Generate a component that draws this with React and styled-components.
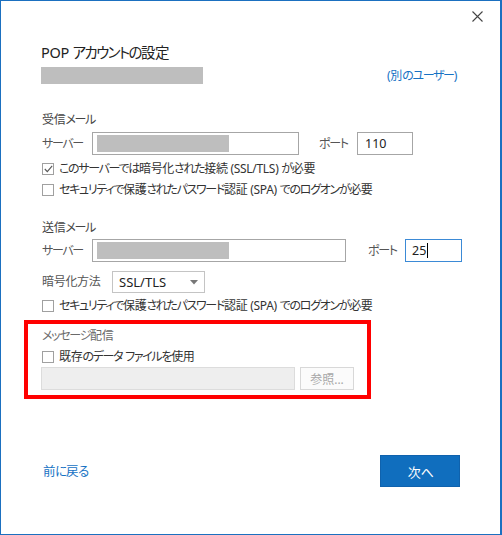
import React from "react";
import styled, { createGlobalStyle } from "styled-components";

const GlobalStyle = createGlobalStyle`
  html, body { margin: 0; padding: 0; background: #fff; }
  body {
    font-family: "Noto Sans", "Noto Sans CJK JP", sans-serif;
    font-feature-settings: "palt";
    -webkit-font-smoothing: antialiased;
  }
  * { box-sizing: border-box; }
`;

const Window = styled.div`
  width: 502px;
  height: 535px;
  border: 1px solid #1b70c0;
  border-right-width: 2px;
  background: #fff;
  display: flex;
  flex-direction: column;
  padding: 0 40px 0 40px;
  color: #333;
  font-family: "Noto Sans", "Noto Sans CJK JP", sans-serif;
  font-feature-settings: "palt";
  font-size: 12px;
  letter-spacing: -0.3px;
`;

/* kana runs are set tighter, like the narrow kana of the Windows UI font */
const Kana = styled.span`
  letter-spacing: -0.11em;
`;

const TextRun = styled.span`
  white-space: pre;
`;

const KANA_SPLIT = /([\u3040-\u30ff]+)/;
const KANA_ONLY = /^[\u3040-\u30ff]+$/;

const JP = ({ children }) => (
  <TextRun>
    {String(children)
      .split(KANA_SPLIT)
      .map((part, i) => (KANA_ONLY.test(part) ? <Kana key={i}>{part}</Kana> : part))}
  </TextRun>
);

const Header = styled.div`
  height: 41px;
  display: flex;
  justify-content: flex-end;
  align-items: flex-start;
  padding-top: 9px;
  margin-right: -23px;
`;

const CloseButton = styled.button`
  width: 12px;
  height: 12px;
  border: none;
  background: none;
  padding: 0;
  display: flex;
  align-items: center;
  justify-content: center;
  cursor: pointer;
`;

const Title = styled.h1`
  margin: 0;
  height: 20px;
  line-height: 20px;
  font-size: 14.5px;
  font-weight: 400;
  letter-spacing: -0.3px;
  color: #222;
  font-family: "Noto Sans", "Noto Sans CJK JP", sans-serif;
`;

const AccountRow = styled.div`
  margin-top: 5px;
  height: 17px;
  display: flex;
  align-items: center;
  justify-content: space-between;
  padding-right: 3px;
`;

const Redacted = styled.div`
  width: ${(p) => p.$w}px;
  height: ${(p) => p.$h}px;
  background: #bebebe;
`;

const Link = styled.a`
  color: #1672c4;
  font-size: ${(p) => p.$size || 12}px;
  text-decoration: none;
  cursor: pointer;
  line-height: 17px;
`;

const SectionLabel = styled.div`
  margin-top: ${(p) => p.$mt}px;
  height: 18px;
  line-height: 18px;
  color: ${(p) => (p.$muted ? "#6a6a6a" : "#444")};
  padding-left: 1px;
`;

const Row = styled.div`
  margin-top: ${(p) => p.$mt || 0}px;
  height: ${(p) => p.$h || 23}px;
  display: flex;
  align-items: center;
`;

const FieldLabel = styled.span`
  width: ${(p) => p.$w}px;
  flex: none;
  color: #555;
  padding-left: 1px;
  line-height: 18px;
`;

const TextBox = styled.div`
  width: ${(p) => p.$w}px;
  height: 23px;
  flex: none;
  border: 1px solid ${(p) => (p.$focused ? "#3b8ad6" : "#a6a6a6")};
  background: #fff;
  display: flex;
  align-items: center;
  padding-left: ${(p) => p.$pl || 4}px;
  font-size: 12.5px;
  letter-spacing: 0;
  color: #222;
  font-family: "Noto Sans", sans-serif;
`;

const Caret = styled.span`
  display: inline-block;
  width: 1px;
  height: 15px;
  background: #000;
  margin-left: 1px;
`;

const Spacer = styled.div`
  width: ${(p) => p.$w}px;
  flex: none;
`;

const CheckRow = styled.label`
  margin-top: ${(p) => p.$mt || 0}px;
  height: 18px;
  display: flex;
  align-items: center;
  padding-left: 1px;
  color: #333;
  line-height: 18px;
  white-space: nowrap;
`;

const CheckBox = styled.span`
  width: 12px;
  height: 12px;
  flex: none;
  border: 1px solid #a0a0a0;
  background: #fff;
  margin-right: 5px;
  display: flex;
  align-items: center;
  justify-content: center;
`;

const Select = styled.div`
  width: 93px;
  height: 22px;
  flex: none;
  border: 1px solid #c4c4c4;
  background: #fff;
  display: flex;
  align-items: center;
  justify-content: space-between;
  padding: 0 6px 0 6px;
  font-family: "Noto Sans", sans-serif;
  font-size: 13px;
  letter-spacing: 0;
  color: #222;
`;

const Highlight = styled.section`
  margin-top: 5px;
  margin-left: -17px;
  width: 347px;
  height: 79px;
  border: 4px solid #ff0000;
  padding: 3px 12px 0 13px;
  display: flex;
  flex-direction: column;
`;

const DisabledInput = styled.div`
  width: 254px;
  height: 23px;
  flex: none;
  border: 1px solid #dcdcdc;
  background: #eeeeee;
`;

const DisabledButton = styled.button`
  margin-left: 5px;
  width: 54px;
  height: 23px;
  flex: none;
  border: 1px solid #d8d8d8;
  background: #fbfbfb;
  color: #a8a8a8;
  font-family: "Noto Sans", "Noto Sans CJK JP", sans-serif;
  font-feature-settings: "palt";
  font-size: 12px;
  padding: 0;
`;

const Footer = styled.div`
  margin-top: 56px;
  height: 32px;
  display: flex;
  align-items: center;
  justify-content: space-between;
  padding-left: 2px;
`;

const PrimaryButton = styled.button`
  width: 80px;
  height: 32px;
  border: 1px solid #0f62ad;
  background: #106ebe;
  color: #fff;
  font-family: "Noto Sans", "Noto Sans CJK JP", sans-serif;
  font-size: 13px;
  padding: 0;
  cursor: pointer;
`;

const CloseIcon = () => (
  <svg width="11" height="11" viewBox="0 0 11 11">
    <path d="M0.5 0.5 L10.5 10.5 M10.5 0.5 L0.5 10.5" stroke="#444" strokeWidth="1.1" fill="none" />
  </svg>
);

const Check = ({ checked }) => (
  <CheckBox>
    {checked && (
      <svg width="9" height="8" viewBox="0 0 9 8">
        <path d="M0.8 4 L3.3 6.6 L8.2 0.8" stroke="#555" strokeWidth="1.1" fill="none" />
      </svg>
    )}
  </CheckBox>
);

const Arrow = () => (
  <svg width="8" height="5" viewBox="0 0 8 5">
    <path d="M0 0 L8 0 L4 4.5 Z" fill="#777" />
  </svg>
);

export default function App() {
  return (
    <>
      <GlobalStyle />
      <Window>
        <Header>
          <CloseButton aria-label="閉じる">
            <CloseIcon />
          </CloseButton>
        </Header>
        <Title>
          <JP>POP アカウントの設定</JP>
        </Title>
        <AccountRow>
          <Redacted $w={162} $h={17} />
          <Link>
            <JP>(別のユーザー)</JP>
          </Link>
        </AccountRow>

        <SectionLabel $mt={27}>
          <JP>受信メール</JP>
        </SectionLabel>
        <Row $mt={3}>
          <FieldLabel $w={51}>
            <JP>サーバー</JP>
          </FieldLabel>
          <TextBox $w={207}>
            <Redacted $w={132} $h={17} />
          </TextBox>
          <Spacer $w={19} />
          <FieldLabel $w={39}>
            <JP>ポート</JP>
          </FieldLabel>
          <TextBox $w={56} $pl={7}>110</TextBox>
        </Row>
        <CheckRow $mt={5}>
          <Check checked />
          <JP>このサーバーでは暗号化された接続 (SSL/TLS) が必要</JP>
        </CheckRow>
        <CheckRow $mt={3}>
          <Check />
          <JP>セキュリティで保護されたパスワード認証 (SPA) でのログオンが必要</JP>
        </CheckRow>

        <SectionLabel $mt={20}>
          <JP>送信メール</JP>
        </SectionLabel>
        <Row $mt={2}>
          <FieldLabel $w={51}>
            <JP>サーバー</JP>
          </FieldLabel>
          <TextBox $w={254}>
            <Redacted $w={132} $h={17} />
          </TextBox>
          <Spacer $w={21} />
          <FieldLabel $w={38}>
            <JP>ポート</JP>
          </FieldLabel>
          <TextBox $w={57} $focused $pl={6}>
            25<Caret />
          </TextBox>
        </Row>
        <Row $mt={9} $h={22}>
          <FieldLabel $w={71}>暗号化方法</FieldLabel>
          <Select>
            <span>SSL/TLS</span>
            <Arrow />
          </Select>
        </Row>
        <CheckRow $mt={4}>
          <Check />
          <JP>セキュリティで保護されたパスワード認証 (SPA) でのログオンが必要</JP>
        </CheckRow>

        <Highlight>
          <SectionLabel $mt={0} $muted>
            <JP>メッセージ配信</JP>
          </SectionLabel>
          <CheckRow $mt={3}>
            <Check />
            <JP>既存のデータ ファイルを使用</JP>
          </CheckRow>
          <Row $mt={1}>
            <DisabledInput />
            <DisabledButton disabled>参照...</DisabledButton>
          </Row>
        </Highlight>

        <Footer>
          <Link $size={12.5}>
            <JP>前に戻る</JP>
          </Link>
          <PrimaryButton>
            <JP>次へ</JP>
          </PrimaryButton>
        </Footer>
      </Window>
    </>
  );
}
